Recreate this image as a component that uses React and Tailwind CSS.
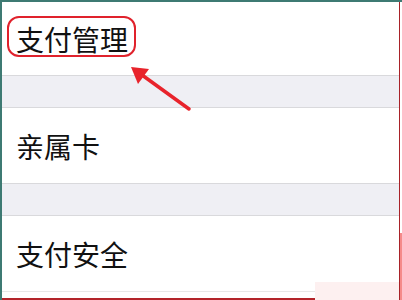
export default function App() {
  const font = { fontFamily: '"Noto Sans CJK SC", "Noto Sans", sans-serif' };
  return (
    <div className="relative w-[402px] h-[300px] overflow-hidden bg-white border-t-2 border-[#3e7a73]" style={font}>
      <div className="flex h-full">
        <div className="w-[2px] bg-[#3e7a73]" />
        <div className="flex-1 flex flex-col">
          <div className="h-[73px] flex items-center pl-[14px] text-[28px] leading-none text-[#111]">支付管理</div>
          <div className="h-[33px] bg-[#efeff4] border-y border-[#d9d9dc]" />
          <div className="h-[75px] flex items-center pl-[14px] text-[28px] leading-none text-[#111]">亲属卡</div>
          <div className="h-[33px] bg-[#efeff4] border-y border-[#d9d9dc]" />
          <div className="h-[76px] flex items-center pl-[14px] text-[28px] leading-none text-[#111] border-b border-[#e8e8e8]">支付安全</div>
          <div className="flex-1 flex flex-col justify-end">
            <div className="h-[2px] w-[314px] bg-[#b3242a]" />
          </div>
        </div>
        <div className="w-[1px] bg-[#a82228]" />
        <div className="w-[2px] flex flex-col">
          <div className="h-[231px] bg-white" />
          <div className="flex-1 bg-[#f58a8a]" />
        </div>
      </div>
      <div className="absolute left-[315px] top-[280px] w-[84px] h-[18px] bg-[#fdf0f0]" />
      <div className="absolute left-[7px] top-[14px] w-[129px] h-[41px] rounded-[12px] border-2 border-[#e0222c]" />
      <svg className="absolute left-0 top-0" width="402" height="300" viewBox="0 0 402 300">
        <line x1="189" y1="107" x2="142" y2="73" stroke="#e8232b" strokeWidth="3.5" strokeLinecap="round" />
        <polygon points="131,65 149,67 138,82" fill="#e8232b" />
      </svg>
    </div>
  );
}
